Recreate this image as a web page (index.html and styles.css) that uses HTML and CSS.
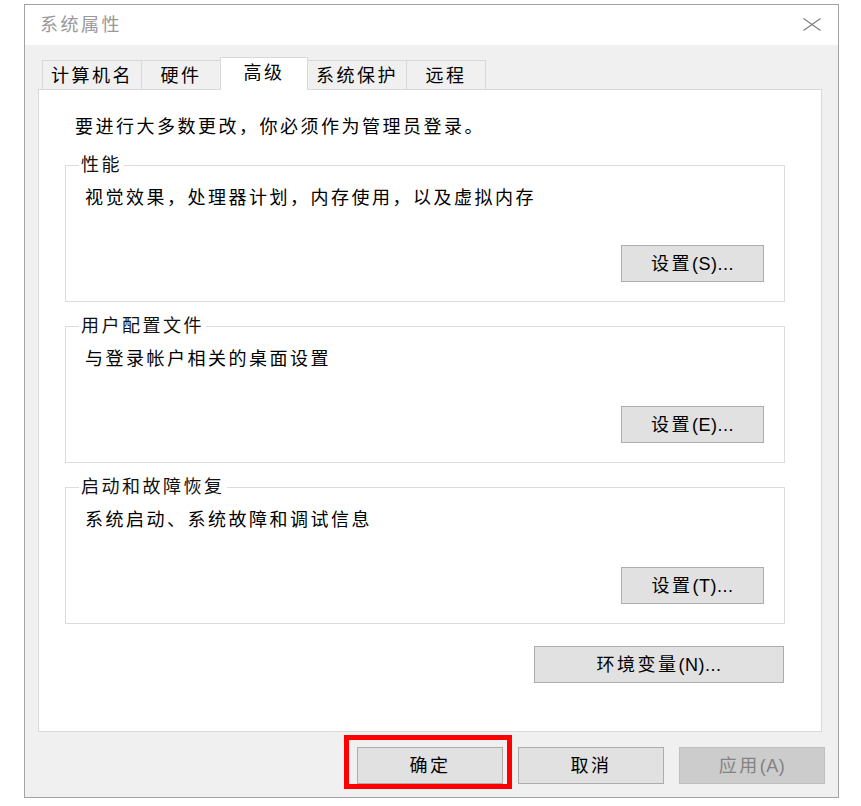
FILE: index.html
```html
<!DOCTYPE html>
<html lang="zh-CN">
<head>
<meta charset="utf-8">
<title>系统属性</title>
<link rel="stylesheet" href="styles.css">
</head>
<body>
<div class="window">
  <div class="titlebar">
    <span class="title">系统属性</span>
    <svg class="close" width="18" height="13" viewBox="0 0 18 13" aria-hidden="true">
      <line x1="0.5" y1="0.5" x2="17.5" y2="12.5"/>
      <line x1="17.5" y1="0.5" x2="0.5" y2="12.5"/>
    </svg>
  </div>
  <div class="body">
    <div class="tabs">
      <div class="tab">计算机名</div>
      <div class="tab">硬件</div>
      <div class="tab active">高级</div>
      <div class="tab">系统保护</div>
      <div class="tab">远程</div>
    </div>
    <div class="panel">
      <p class="notice">要进行大多数更改，你必须作为管理员登录。</p>
      <fieldset class="group">
        <legend>性能</legend>
        <p class="desc">视觉效果，处理器计划，内存使用，以及虚拟内存</p>
        <div class="actions"><button class="btn">设置<span class="lat">(S)...</span></button></div>
      </fieldset>
      <fieldset class="group">
        <legend>用户配置文件</legend>
        <p class="desc">与登录帐户相关的桌面设置</p>
        <div class="actions"><button class="btn">设置<span class="lat">(E)...</span></button></div>
      </fieldset>
      <fieldset class="group">
        <legend>启动和故障恢复</legend>
        <p class="desc">系统启动、系统故障和调试信息</p>
        <div class="actions"><button class="btn">设置<span class="lat">(T)...</span></button></div>
      </fieldset>
      <div class="env-row"><button class="btn btn-wide">环境变量<span class="lat">(N)...</span></button></div>
    </div>
    <div class="footer">
      <div class="default-wrap"><button class="btn btn-foot">确定</button></div>
      <button class="btn btn-foot">取消</button>
      <button class="btn btn-foot disabled">应用<span class="lat">(A)</span></button>
    </div>
  </div>
</div>
</body>
</html>
```
FILE: styles.css
```css
* { box-sizing: border-box; }

html, body {
  margin: 0;
  padding: 0;
  background: #ffffff;
}

body {
  font-family: "Liberation Sans", "Noto Sans CJK SC", sans-serif;
  font-size: 18px;
  letter-spacing: 2.5px;
  color: #000;
}

.window {
  margin: 4px 0 0 24px;
  width: 815px;
  height: 794px;
  border: 1px solid #a3a3a3;
  display: flex;
  flex-direction: column;
}

.titlebar {
  height: 40px;
  flex: none;
  background: #fff;
  display: flex;
  align-items: center;
  justify-content: space-between;
  padding: 0 17px 0 15px;
}

.title {
  color: #999999;
  line-height: 24px;
}

.close {
  display: block;
  margin-top: -1px;
}
.close line {
  stroke: #7f7f7f;
  stroke-width: 1.2;
}

.body {
  flex: 1;
  background: #f0f0f0;
  padding: 12px 13px 0 13px;
}

.tabs {
  display: flex;
  align-items: flex-end;
  margin-left: 4px;
  margin-bottom: -1px;
  position: relative;
  z-index: 1;
}

.tab {
  height: 29px;
  margin-bottom: 1px;
  padding: 3px 8px 0;
  line-height: 24px;
  border: 1px solid #d9d9d9;
  border-bottom: 0;
  background: #f0f0f0;
  min-width: 80px;
  text-align: center;
  white-space: nowrap;
}
.tab + .tab { margin-left: -1px; }

.tab.active {
  height: 33px;
  margin-bottom: 0;
  min-width: 88px;
  background: #fff;
}

.panel {
  height: 643px;
  margin-right: 3px;
  background: #fff;
  border: 1px solid #d9d9d9;
  padding: 25px 36px 0 26px;
}

.notice {
  margin: 0 0 0 10px;
  line-height: 24px;
}

.group {
  margin: 12px 0 0;
  padding: 9px 20px 19px 19px;
  border: 1px solid #dcdcdc;
  min-width: 0;
}
.notice + .group { margin-top: 14px; }

.group legend {
  margin-left: -6px;
  padding: 0 2px;
  line-height: 24px;
  color: #111;
}

.desc {
  margin: 0;
  line-height: 24px;
}

.actions {
  display: flex;
  justify-content: flex-end;
  margin-top: 35px;
}

.btn {
  font: inherit;
  letter-spacing: 2.5px;
  color: #000;
  width: 143px;
  height: 37px;
  padding: 0;
  background: #e1e1e1;
  border: 1px solid #adadad;
  border-radius: 0;
  line-height: 24px;
}

.lat { letter-spacing: 0.5px; }

.env-row {
  display: flex;
  justify-content: flex-end;
  margin: 22px 1px 0 0;
}

.btn-wide { width: 250px; }

.footer {
  display: flex;
  justify-content: flex-end;
  gap: 15px;
  margin-top: 15px;
}

.btn-foot { width: 146px; display: block; }

.btn.disabled {
  background: #cccccc;
  border-color: #bfbfbf;
  color: #838383;
}

.default-wrap {
  position: relative;
}
.default-wrap::after {
  content: "";
  position: absolute;
  top: -12px;
  left: -13px;
  right: -9px;
  bottom: -5px;
  border: 5px solid #ff0000;
  pointer-events: none;
}
```
